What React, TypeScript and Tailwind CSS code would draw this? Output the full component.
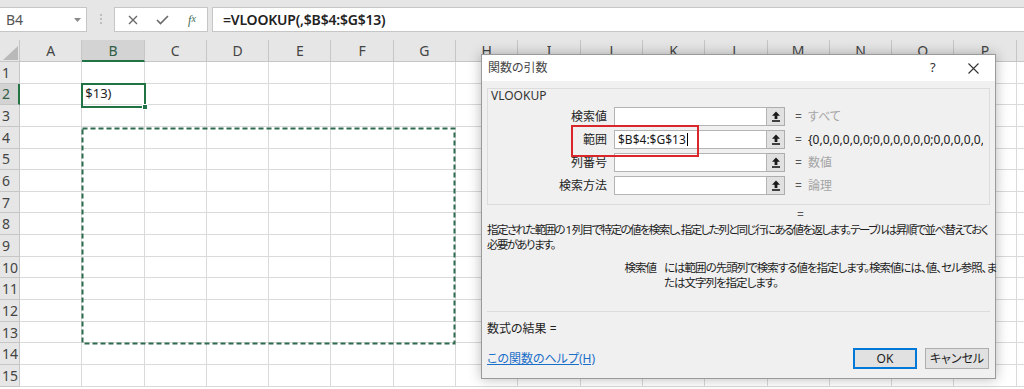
import React from 'react'

const COLS = ['A', 'B', 'C', 'D', 'E', 'F', 'G', 'H', 'I', 'J', 'K', 'L', 'M', 'N', 'O', 'P', '']
const ROWS = Array.from({ length: 15 }, (_, i) => i + 1)

const UI_FONT = "font-['Noto_Sans','Noto_Sans_CJK_JP',sans-serif]"

function UploadIcon() {
  return (
    <svg width="10" height="11" viewBox="0 0 10 11">
      <path d="M5 0.5 L9 4.8 H6.4 V8 H3.6 V4.8 H1 Z" fill="#1a1a1a" />
      <rect x="1" y="9.2" width="8" height="1.6" fill="#1a1a1a" />
    </svg>
  )
}

function FormulaBar() {
  return (
    <div className="flex h-[40px] items-start bg-[#e6e6e6] pt-[7px]">
      <div className="relative flex h-[25px] w-[87px] items-center border border-l-0 border-[#c6c6c6] bg-white pl-[6px] text-[14px] text-[#555]">
        B4
        <svg className="absolute right-[5px] top-[10px]" width="7" height="4" viewBox="0 0 7 4">
          <path d="M0 0 H7 L3.5 4 Z" fill="#8a8a8a" />
        </svg>
      </div>
      <div className="flex w-[27px] flex-col items-center gap-[2px] pt-[7px]">
        <span className="h-[2px] w-[2px] rounded-full bg-[#b0b0b0]" />
        <span className="h-[2px] w-[2px] rounded-full bg-[#b0b0b0]" />
        <span className="h-[2px] w-[2px] rounded-full bg-[#b0b0b0]" />
      </div>
      <div className="flex h-[25px] w-[94px] items-center border border-[#c6c6c6] bg-white">
        <div className="flex w-[32px] justify-center pl-[3px]">
          <svg width="10" height="10" viewBox="0 0 10 10">
            <path d="M1 1 L9 9 M9 1 L1 9" stroke="#6a6a6a" strokeWidth="1.4" />
          </svg>
        </div>
        <div className="flex w-[30px] justify-center">
          <svg width="13" height="10" viewBox="0 0 13 10">
            <path d="M1 5 L4.5 8.5 L12 1" stroke="#6a6a6a" strokeWidth="1.6" fill="none" />
          </svg>
        </div>
        <div className="flex w-[30px] justify-center font-['Liberation_Serif',serif] text-[12px] italic text-[#3d6b52]">
          <span>f</span>
          <span className="text-[10px] leading-[16px]">x</span>
        </div>
      </div>
      <div className="ml-[4px] flex h-[25px] flex-1 items-center border border-r-0 border-[#c6c6c6] bg-white pl-[10px] font-['Noto_Sans',sans-serif] text-[14px] font-semibold tracking-[-0.2px] text-[#222]">
        =VLOOKUP(,$B$4:$G$13)
      </div>
    </div>
  )
}

function Sheet() {
  return (
    <div className="grid grid-cols-[20px_repeat(17,62.3px)] grid-rows-[22px_repeat(15,21.65px)] font-['Noto_Sans',sans-serif]">
      <div className="relative border-b border-r border-[#c6c6c6] bg-[#e6e6e6]">
        <svg className="absolute left-[3px] top-[6px]" width="15" height="14" viewBox="0 0 15 14">
          <path d="M15 0 V14 H0 Z" fill="#b9b9b9" />
        </svg>
      </div>
      {COLS.map((c, i) => (
        <div
          key={i}
          className={
            c === 'B'
              ? 'flex items-center justify-center border-b-2 border-r border-b-[#217346] border-r-[#c6c6c6] bg-[#d3d3d3] text-[14px] text-[#2f5d45]'
              : 'flex items-center justify-center border-b border-r border-[#c6c6c6] bg-[#e6e6e6] text-[14px] text-[#444]'
          }
        >
          {c}
        </div>
      ))}
      {ROWS.map((r) => (
        <React.Fragment key={r}>
          <div
            className={
              r === 2
                ? 'flex items-center border-b border-r-2 border-b-[#c6c6c6] border-r-[#217346] bg-[#d3d3d3] pl-[2px] text-[14px] text-[#2f5d45]'
                : 'flex items-center border-b border-r border-[#c6c6c6] bg-[#e6e6e6] pl-[2px] text-[14px] text-[#444]'
            }
          >
            {r}
          </div>
          {COLS.map((c, i) => (
            <div key={i} className="flex items-center border-b border-r border-[#dadada] pl-[3px] text-[13px] text-[#222]">
              {r === 2 && c === 'B' ? '$13)' : null}
            </div>
          ))}
        </React.Fragment>
      ))}
    </div>
  )
}

function ArgRow({ label, value, result, dim }: { label: string; value?: string; result: string; dim: boolean }) {
  return (
    <div className="flex h-[19px] items-center">
      <div className="w-[119px] shrink-0 text-right">{label}</div>
      <div className="ml-[7px] flex h-[19px] w-[153px] shrink-0 items-center border border-[#b4b4b4] bg-white pl-[3px] text-[12px] text-[#1a1a1a]">
        {value}
        {value ? <span className="ml-[1px] h-[13px] w-px bg-black" /> : null}
      </div>
      <div className="flex h-[19px] w-[18px] shrink-0 items-center justify-center border border-l-0 border-[#adadad] bg-[#e1e1e1]">
        <UploadIcon />
      </div>
      <div className="ml-[10px] w-[13px] shrink-0 text-[#555]">=</div>
      <div className={dim ? 'w-[175px] overflow-hidden whitespace-nowrap text-[#a5a5a5]' : 'w-[175px] overflow-hidden whitespace-nowrap text-[#1a1a1a]'}>
        {result}
      </div>
    </div>
  )
}

function ArgsDialog() {
  return (
    <div
      className={`absolute left-[481px] top-[54px] h-[325px] w-[515px] border border-[#9a9a9a] bg-[#f0f0f0] text-[12px] text-[#1e1e1e] shadow-[0_0_12px_rgba(0,0,0,0.28)] [font-feature-settings:'palt'] ${UI_FONT}`}
    >
      <div className="flex h-[26px] items-center bg-white pl-[6px] text-[#444]">
        <span className="flex-1">関数の引数</span>
        <span className="w-[38px] text-[13px] text-[#333]">?</span>
        <svg className="mr-[16px]" width="11" height="11" viewBox="0 0 11 11">
          <path d="M0.5 0.5 L10.5 10.5 M10.5 0.5 L0.5 10.5" stroke="#333" strokeWidth="1.1" />
        </svg>
      </div>
      <div className="px-[5px] pt-[7px]">
        <div className="h-[117px] border border-[#dcdcdc]">
          <div className="pl-[3px] leading-[14px] text-[#333]">VLOOKUP</div>
          <div className="mt-[4px] flex flex-col gap-[4px]">
            <ArgRow label="検索値" result="すべて" dim />
            <ArgRow label="範囲" value="$B$4:$G$13" result="{0,0,0,0,0,0;0,0,0,0,0,0;0,0,0,0,0,0" dim={false} />
            <ArgRow label="列番号" result="数値" dim />
            <ArgRow label="検索方法" result="論理" dim />
          </div>
        </div>
        <div className="ml-[310px] mt-[3px] h-[14px] leading-[14px] text-[#555]">=</div>
        <div className="whitespace-nowrap text-[11.5px] leading-[15px] tracking-[-1.6px]">
          <div>指定された範囲の 1 列目で特定の値を検索し、指定した列と同じ行にある値を返します。テーブルは昇順で並べ替えておく</div>
          <div>必要があります。</div>
        </div>
        <div className="mt-[8px] flex whitespace-nowrap text-[11.5px] leading-[15px] tracking-[-1px]">
          <div className="w-[169px] shrink-0 text-right">検索値</div>
          <div className="ml-[8px]">
            <div>には範囲の先頭列で検索する値を指定します。検索値には、値、セル参照、ま</div>
            <div>たは文字列を指定します。</div>
          </div>
        </div>
        <div className="mt-[21px] h-px bg-[#dcdcdc]" />
        <div className="mt-[9px] leading-[16px]">数式の結果 =</div>
        <div className="mt-[11px] flex items-center justify-between pr-[1px]">
          <span className="text-[#1a6fc9] underline">この関数のヘルプ(H)</span>
          <div className="flex gap-[8px]">
            <div className="flex h-[21px] w-[64px] items-center justify-center border-2 border-[#0078d7] bg-[#e1e1e1]">OK</div>
            <div className="flex h-[21px] w-[64px] items-center justify-center border border-[#adadad] bg-[#e1e1e1]">キャンセル</div>
          </div>
        </div>
      </div>
      <div className="absolute left-[89px] top-[70px] h-[32px] w-[128px] border-2 border-[#d9262b]" />
    </div>
  )
}

export default function App() {
  return (
    <div className="relative h-[389px] w-[1024px] overflow-hidden bg-white">
      <FormulaBar />
      <Sheet />
      <div className="absolute left-[81px] top-[83px] h-[25px] w-[65px] border-2 border-[#217346]" />
      <div className="absolute left-[142px] top-[104px] h-[6px] w-[6px] border border-white bg-[#217346]" />
      <svg className="absolute left-[81px] top-[127px]" width="376" height="219" viewBox="0 0 376 219">
        <rect x="1.5" y="1.5" width="372" height="215" fill="none" stroke="#2e6b4e" strokeWidth="2" strokeDasharray="5 3" />
      </svg>
      <ArgsDialog />
    </div>
  )
}
